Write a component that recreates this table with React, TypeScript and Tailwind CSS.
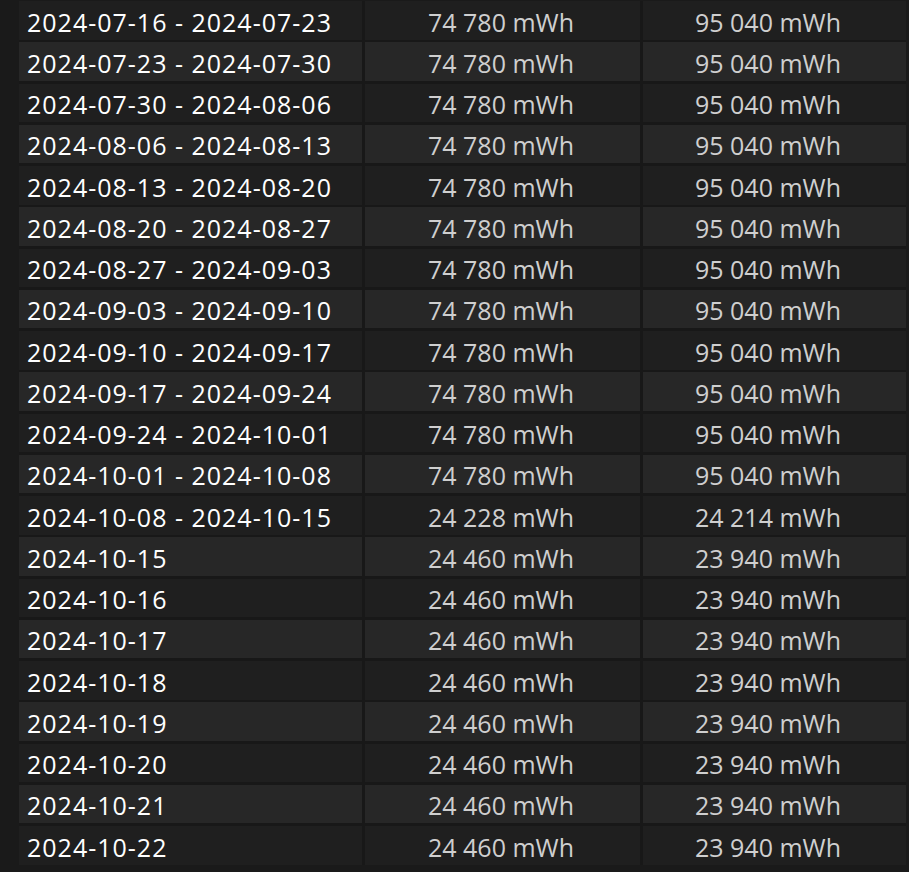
const weekly = [
  ["2024-07-16 - 2024-07-23", "74 780 mWh", "95 040 mWh"],
  ["2024-07-23 - 2024-07-30", "74 780 mWh", "95 040 mWh"],
  ["2024-07-30 - 2024-08-06", "74 780 mWh", "95 040 mWh"],
  ["2024-08-06 - 2024-08-13", "74 780 mWh", "95 040 mWh"],
  ["2024-08-13 - 2024-08-20", "74 780 mWh", "95 040 mWh"],
  ["2024-08-20 - 2024-08-27", "74 780 mWh", "95 040 mWh"],
  ["2024-08-27 - 2024-09-03", "74 780 mWh", "95 040 mWh"],
  ["2024-09-03 - 2024-09-10", "74 780 mWh", "95 040 mWh"],
  ["2024-09-10 - 2024-09-17", "74 780 mWh", "95 040 mWh"],
  ["2024-09-17 - 2024-09-24", "74 780 mWh", "95 040 mWh"],
  ["2024-09-24 - 2024-10-01", "74 780 mWh", "95 040 mWh"],
  ["2024-10-01 - 2024-10-08", "74 780 mWh", "95 040 mWh"],
  ["2024-10-08 - 2024-10-15", "24 228 mWh", "24 214 mWh"],
  ["2024-10-15", "24 460 mWh", "23 940 mWh"],
  ["2024-10-16", "24 460 mWh", "23 940 mWh"],
  ["2024-10-17", "24 460 mWh", "23 940 mWh"],
  ["2024-10-18", "24 460 mWh", "23 940 mWh"],
  ["2024-10-19", "24 460 mWh", "23 940 mWh"],
  ["2024-10-20", "24 460 mWh", "23 940 mWh"],
  ["2024-10-21", "24 460 mWh", "23 940 mWh"],
  ["2024-10-22", "24 460 mWh", "23 940 mWh"],
];

export default function App() {
  return (
    <div
      className="h-[872px] w-[909px] overflow-hidden bg-[#1a1a1a] pl-[19px] pt-[1px]"
      style={{ fontFamily: '"Open Sans", "Noto Sans", sans-serif' }}
    >
      <div className="grid w-[887px] grid-cols-[343px_275px_263px] gap-x-[3px] gap-y-[2.75px] bg-[#181818] text-[25px]">
        {weekly.map(([period, used, produced], i) => {
          const bg = i % 2 === 0 ? "bg-[#1f1f1f]" : "bg-[#272727]";
          return [
            <div
              key={`${period}-p`}
              className={`flex h-[38.5px] items-center pl-2 pt-1 tracking-[1px] text-white ${bg}`}
            >
              {period}
            </div>,
            <div
              key={`${period}-u`}
              className={`flex h-[38.5px] items-center justify-end pr-[66px] pt-1 text-[#cfcfcf] ${bg}`}
            >
              {used}
            </div>,
            <div
              key={`${period}-g`}
              className={`flex h-[38.5px] items-center justify-end pr-[65px] pt-1 text-[#cfcfcf] ${bg}`}
            >
              {produced}
            </div>,
          ];
        })}
      </div>
    </div>
  );
}
